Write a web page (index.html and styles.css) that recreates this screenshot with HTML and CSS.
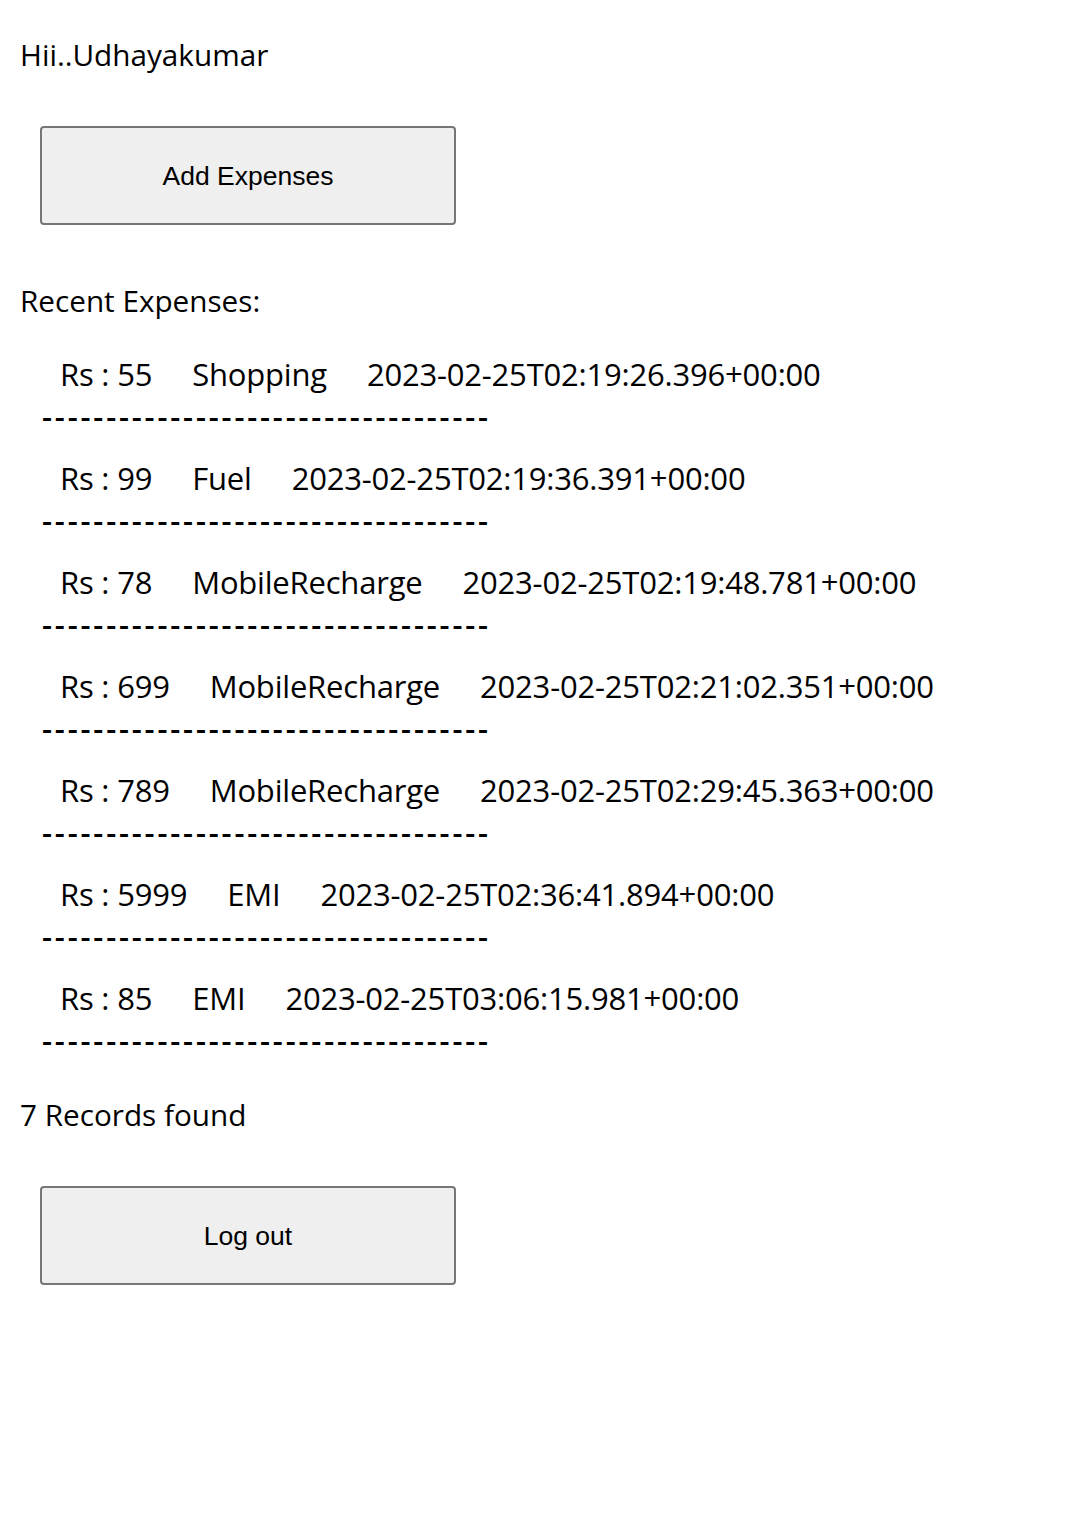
FILE: index.html
```html
<!DOCTYPE html>
<html lang="en">
<head>
<meta charset="utf-8">
<title>Expenses</title>
<link rel="stylesheet" href="styles.css">
</head>
<body>
<div class="page">
  <div class="greeting">Hii..Udhayakumar</div>
  <button class="btn btn-first" type="button">Add Expenses</button>
  <div class="section-title">Recent Expenses:</div>
  <ul class="list">
    <li class="item">
      <div class="item-text"><span>Rs : 55</span><span>Shopping</span><span>2023-02-25T02:19:26.396+00:00</span></div>
      <div class="dashes">-----------------------------------</div>
    </li>
    <li class="item">
      <div class="item-text"><span>Rs : 99</span><span>Fuel</span><span>2023-02-25T02:19:36.391+00:00</span></div>
      <div class="dashes">-----------------------------------</div>
    </li>
    <li class="item">
      <div class="item-text"><span>Rs : 78</span><span>MobileRecharge</span><span>2023-02-25T02:19:48.781+00:00</span></div>
      <div class="dashes">-----------------------------------</div>
    </li>
    <li class="item">
      <div class="item-text"><span>Rs : 699</span><span>MobileRecharge</span><span>2023-02-25T02:21:02.351+00:00</span></div>
      <div class="dashes">-----------------------------------</div>
    </li>
    <li class="item">
      <div class="item-text"><span>Rs : 789</span><span>MobileRecharge</span><span>2023-02-25T02:29:45.363+00:00</span></div>
      <div class="dashes">-----------------------------------</div>
    </li>
    <li class="item">
      <div class="item-text"><span>Rs : 5999</span><span>EMI</span><span>2023-02-25T02:36:41.894+00:00</span></div>
      <div class="dashes">-----------------------------------</div>
    </li>
    <li class="item">
      <div class="item-text"><span>Rs : 85</span><span>EMI</span><span>2023-02-25T03:06:15.981+00:00</span></div>
      <div class="dashes">-----------------------------------</div>
    </li>
  </ul>
  <div class="count">7 Records found</div>
  <button class="btn btn-logout" type="button">Log out</button>
</div>
</body>
</html>
```

FILE: styles.css
```css
html, body {
  margin: 0;
  padding: 0;
  background: #ffffff;
}

body {
  font-family: "Open Sans", "Noto Sans", sans-serif;
  color: #000000;
}

.page {
  display: flex;
  flex-direction: column;
  align-items: flex-start;
  padding-left: 20px;
}

.greeting,
.section-title,
.count {
  font-size: 29.7px;
  line-height: 40px;
}

.greeting {
  margin-top: 35px;
}

.btn {
  margin-left: 20px;
  width: 416px;
  height: 99px;
  box-sizing: border-box;
  border: 2px solid #767676;
  border-radius: 4px;
  background: #efefef;
  color: #000000;
  font-family: "Liberation Sans", Arial, sans-serif;
  font-size: 26.5px;
  padding: 2px 0 0 0;
  display: flex;
  align-items: center;
  justify-content: center;
}

.btn-first {
  margin-top: 51px;
}

.section-title {
  margin-top: 56px;
}

.list {
  list-style: none;
  margin: 31px 0 0 0;
  padding: 0;
}

.item {
  height: 104px;
}

.item-text {
  margin-left: 40px;
  display: flex;
  gap: 40px;
  font-size: 31px;
  line-height: 44px;
  letter-spacing: -0.2px;
  white-space: nowrap;
}

.dashes {
  margin-left: 22px;
  margin-top: 5px;
  font-size: 31px;
  line-height: 30px;
  letter-spacing: 2.85px;
  font-weight: 600;
  white-space: nowrap;
}

.count {
  margin-top: 15px;
}

.btn-logout {
  margin-top: 51px;
}
```
